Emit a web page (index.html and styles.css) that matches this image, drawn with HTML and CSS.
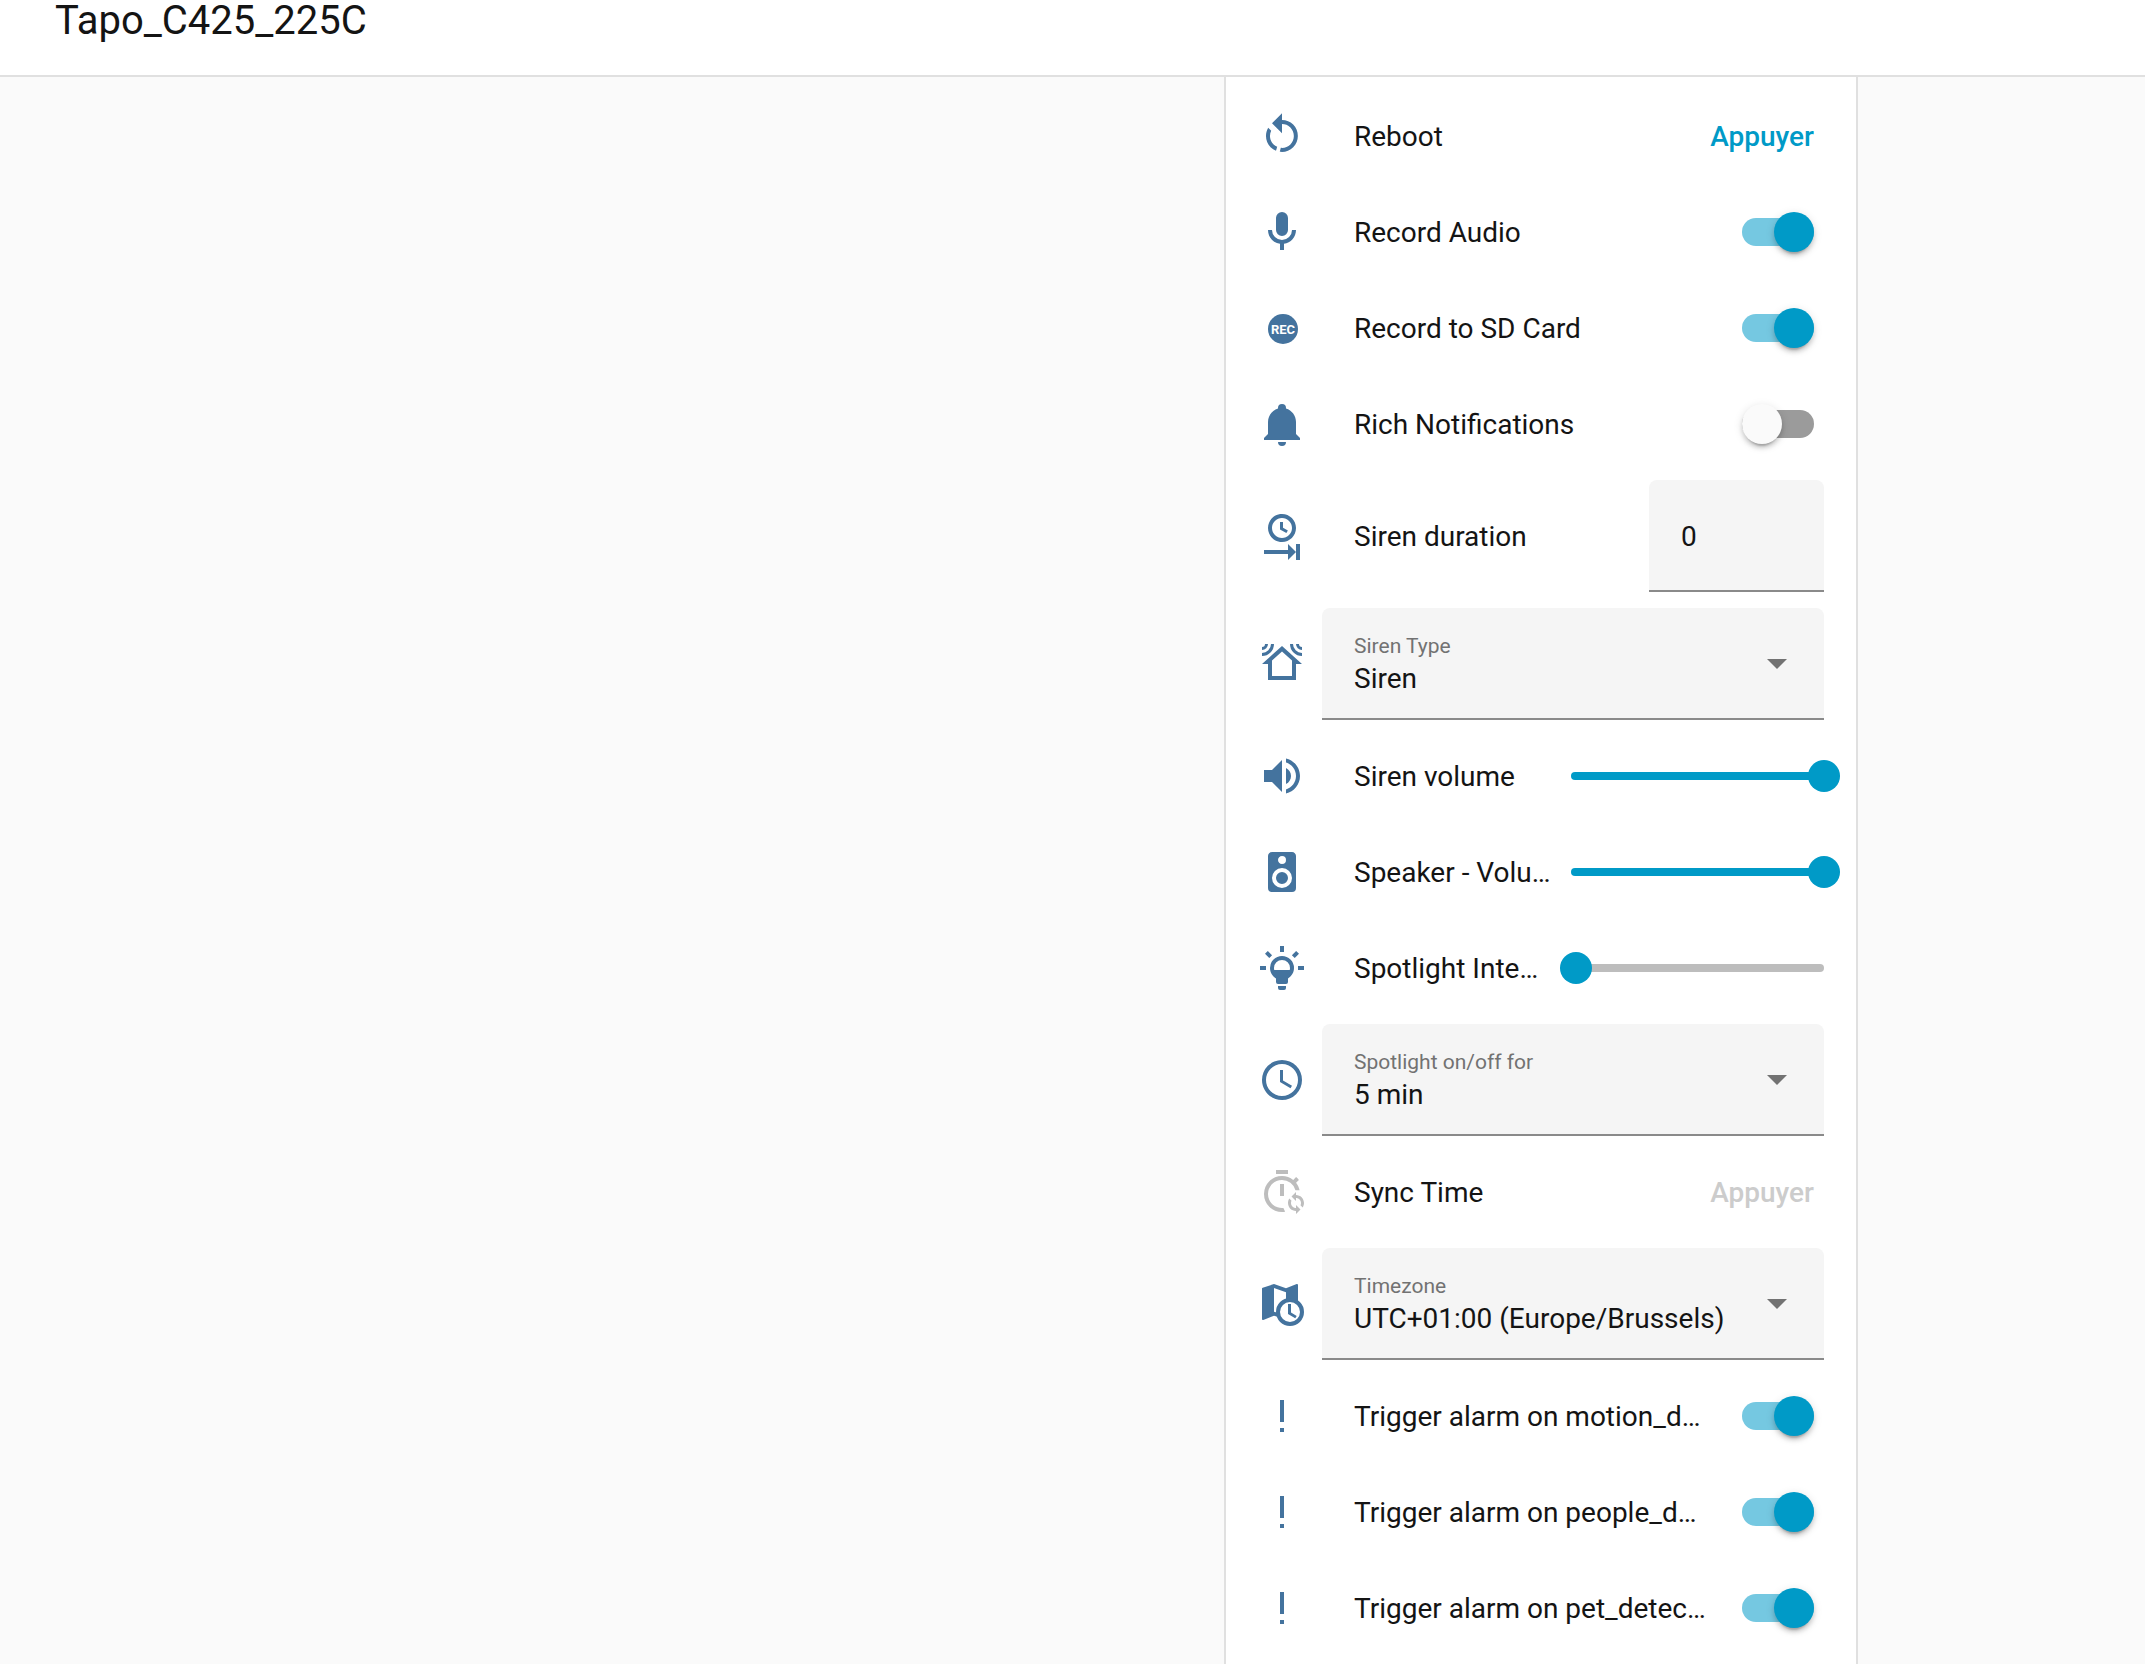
FILE: index.html
```html
<!DOCTYPE html>
<html lang="fr">
<head>
<meta charset="utf-8">
<meta name="viewport" content="width=device-width, initial-scale=1">
<title>Tapo_C425_225C</title>
<link rel="stylesheet" href="styles.css">
</head>
<body>
<header class="toolbar">
  <h1 class="toolbar-title">Tapo_C425_225C</h1>
</header>
<main class="page">
  <section class="card">
    <div class="row">
      <span class="icon"><svg viewBox="0 0 24 24" aria-hidden="true"><path d="M12,4C14.1,4 16.1,4.8 17.6,6.3C20.7,9.4 20.7,14.5 17.6,17.6C15.8,19.5 13.3,20.2 10.9,19.9L11.4,17.9C13.1,18.1 14.9,17.5 16.2,16.2C18.5,13.9 18.5,10.1 16.2,7.7C15.1,6.6 13.5,6 12,6V10.6L7,5.6L12,0.6V4M6.3,17.6C3.7,15 3.3,11 5.1,7.9L6.6,9.4C5.5,11.6 5.9,14.4 7.8,16.2C8.3,16.7 8.9,17.1 9.6,17.4L9,19.4C8,19 7.1,18.4 6.3,17.6Z"/></svg></span>
      <span class="name" id="reboot">Reboot</span>
      <button class="press" type="button" aria-describedby="reboot">Appuyer</button>
    </div>
    <div class="row">
      <span class="icon"><svg viewBox="0 0 24 24" aria-hidden="true"><path d="M12,2A3,3 0 0,1 15,5V11A3,3 0 0,1 12,14A3,3 0 0,1 9,11V5A3,3 0 0,1 12,2M19,11C19,14.53 16.39,17.44 13,17.93V21H11V17.93C7.61,17.44 5,14.53 5,11H7A5,5 0 0,0 12,16A5,5 0 0,0 17,11H19Z"/></svg></span>
      <label class="name" for="audio">Record Audio</label>
      <input class="switch" id="audio" type="checkbox" role="switch" checked>
    </div>
    <div class="row">
      <span class="icon"><svg viewBox="0 0 48 48" aria-hidden="true"><circle cx="25" cy="25" r="15"/><text class="rec" x="25" y="30" text-anchor="middle">REC</text></svg></span>
      <label class="name" for="sdcard">Record to SD Card</label>
      <input class="switch" id="sdcard" type="checkbox" role="switch" checked>
    </div>
    <div class="row">
      <span class="icon"><svg viewBox="0 0 24 24" aria-hidden="true"><path d="M21,19V20H3V19L5,17V11C5,7.9 7.03,5.17 10,4.29C10,4.19 10,4.1 10,4A2,2 0 0,1 12,2A2,2 0 0,1 14,4C14,4.1 14,4.19 14,4.29C16.97,5.17 19,7.9 19,11V17L21,19M14,21A2,2 0 0,1 12,23A2,2 0 0,1 10,21"/></svg></span>
      <label class="name" for="rich">Rich Notifications</label>
      <input class="switch" id="rich" type="checkbox" role="switch">
    </div>
    <div class="row">
      <span class="icon"><svg viewBox="0 0 24 24" aria-hidden="true"><path d="M12 1C8.14 1 5 4.14 5 8S8.14 15 12 15 19 11.86 19 8 15.86 1 12 1M12 3C14.76 3 17 5.24 17 8S14.76 13 12 13 7 10.76 7 8 9.24 3 12 3M11 5V8.69L14.19 10.53L14.94 9.23L12.5 7.82V5M15 16V19H3V21H15V24L19 20V24H21V16H19V20L15 16Z"/></svg></span>
      <label class="name" for="duration">Siren duration</label>
      <input class="number" id="duration" type="text" inputmode="numeric" value="0">
    </div>
    <div class="row">
      <span class="icon"><svg viewBox="0 0 24 24" aria-hidden="true"><path d="M12 5.69L17 10.19V18H7V10.19L12 5.69M12 3L2 12H5V20H19V12H22L12 3M8 2A6 6 0 0 1 2 8V6.5A4.5 4.5 0 0 0 6.5 2H8M5 2A3 3 0 0 1 2 5V3.5A1.5 1.5 0 0 0 3.5 2H5M16 2A6 6 0 0 0 22 8V6.5A4.5 4.5 0 0 1 17.5 2H16M19 2A3 3 0 0 0 22 5V3.5A1.5 1.5 0 0 1 20.5 2H19"/></svg></span>
      <div class="field">
        <label class="field-label" for="siren-type">Siren Type</label>
        <select class="select" id="siren-type"><option>Siren</option></select>
        <svg class="arrow" viewBox="0 0 20 10" aria-hidden="true"><path d="M0 0H20L10 10Z"/></svg>
      </div>
    </div>
    <div class="row">
      <span class="icon"><svg viewBox="0 0 24 24" aria-hidden="true"><path d="M14,3.23V5.29C16.89,6.15 19,8.83 19,12C19,15.17 16.89,17.84 14,18.7V20.77C18,19.86 21,16.28 21,12C21,7.72 18,4.14 14,3.23M16.5,12C16.5,10.23 15.5,8.71 14,7.97V16C15.5,15.29 16.5,13.76 16.5,12M3,9V15H7L12,20V4L7,9H3Z"/></svg></span>
      <label class="name" for="siren-volume">Siren volume</label>
      <div class="track" style="--value: 100%"><input class="slider" id="siren-volume" type="range" min="0" max="100" value="100"></div>
    </div>
    <div class="row">
      <span class="icon"><svg viewBox="0 0 24 24" aria-hidden="true"><path d="M12,12A3,3 0 0,0 9,15A3,3 0 0,0 12,18A3,3 0 0,0 15,15A3,3 0 0,0 12,12M12,20A5,5 0 0,1 7,15A5,5 0 0,1 12,10A5,5 0 0,1 17,15A5,5 0 0,1 12,20M12,4A2,2 0 0,1 14,6A2,2 0 0,1 12,8C10.89,8 10,7.1 10,6C10,4.89 10.89,4 12,4M17,2H7C5.89,2 5,2.89 5,4V20A2,2 0 0,0 7,22H17A2,2 0 0,0 19,20V4C19,2.89 18.1,2 17,2Z"/></svg></span>
      <label class="name" for="speaker">Speaker - Volume</label>
      <div class="track" style="--value: 100%"><input class="slider" id="speaker" type="range" min="0" max="100" value="100"></div>
    </div>
    <div class="row">
      <span class="icon"><svg viewBox="0 0 24 24" aria-hidden="true"><path fill-rule="evenodd" d="M12,6A6,6 0 0,1 18,12C18,14.22 16.79,16.16 15,17.2V19A1,1 0 0,1 14,20H10A1,1 0 0,1 9,19V17.2C7.21,16.16 6,14.22 6,12A6,6 0 0,1 12,6M14,21V22A1,1 0 0,1 13,23H11A1,1 0 0,1 10,22V21H14M20,11H23V13H20V11M1,11H4V13H1V11M13,1V4H11V1H13M4.92,3.5L7.05,5.64L5.63,7.05L3.5,4.93L4.92,3.5M16.95,5.63L19.07,3.5L20.5,4.93L18.37,7.05L16.95,5.63M8.13 13H15.87C15.96 12.7 16 12.36 16 12A4 4 0 0 0 8 12C8 12.36 8.04 12.7 8.13 13Z"/></svg></span>
      <label class="name" for="intensity">Spotlight Intensity</label>
      <div class="track" style="--value: 2%"><input class="slider" id="intensity" type="range" min="0" max="100" value="2"></div>
    </div>
    <div class="row">
      <span class="icon"><svg viewBox="0 0 24 24" aria-hidden="true"><path d="M12,20A8,8 0 0,0 20,12A8,8 0 0,0 12,4A8,8 0 0,0 4,12A8,8 0 0,0 12,20M12,2A10,10 0 0,1 22,12A10,10 0 0,1 12,22C6.47,22 2,17.5 2,12A10,10 0 0,1 12,2M12.5,7V12.25L17,14.92L16.25,16.15L11,13V7H12.5Z"/></svg></span>
      <div class="field">
        <label class="field-label" for="spotlight-for">Spotlight on/off for</label>
        <select class="select" id="spotlight-for"><option>5 min</option></select>
        <svg class="arrow" viewBox="0 0 20 10" aria-hidden="true"><path d="M0 0H20L10 10Z"/></svg>
      </div>
    </div>
    <div class="row">
      <span class="icon icon-off"><svg viewBox="0 0 24 24" aria-hidden="true"><path d="M9 1H15V3H9ZM11 8H13V14H11ZM13.58 21.86C13.07 21.95 12.54 22 12 22A9 9 0 0 1 3 13A9 9 0 0 1 12 4C14.12 4 16.07 4.74 17.62 6L19.04 4.56C19.55 5 20 5.46 20.45 6L19.03 7.39C19.9 8.45 20.5 9.7 20.8 11.1L18.73 11.1A7 7 0 0 0 12 6A7 7 0 0 0 5 13A7 7 0 0 0 12.7 19.96ZM19 12V13.5C21.21 13.5 23 15.29 23 17.5C23 18.32 22.75 19.08 22.33 19.71L21.24 18.62C21.41 18.28 21.5 17.9 21.5 17.5C21.5 16.12 20.38 15 19 15V16.5L16.75 14.25L19 12M19 23V21.5C16.79 21.5 15 19.71 15 17.5C15 16.68 15.25 15.92 15.67 15.29L16.76 16.38C16.59 16.72 16.5 17.1 16.5 17.5C16.5 18.88 17.62 20 19 20V18.5L21.25 20.75L19 23Z"/></svg></span>
      <span class="name" id="sync">Sync Time</span>
      <button class="press" type="button" aria-describedby="sync" disabled>Appuyer</button>
    </div>
    <div class="row">
      <span class="icon"><svg viewBox="0 0 24 24" aria-hidden="true"><path fill-rule="evenodd" d="M19.5 2L19.34 2.03L14 4.1L8 2L2.36 3.9A.5 .5 0 0 0 2 4.38V19.5A.5 .5 0 0 0 2.66 19.97L8 17.9L12 19L20 14V2.5A.5 .5 0 0 0 19.5 2M14 16V6.1L8 4V15.9L12 17Z"/><circle class="dial" cx="16" cy="16" r="6"/><path d="M15 12H16.5V16.25L19.36 17.94L18.61 19.16L15 17Z"/></svg></span>
      <div class="field">
        <label class="field-label" for="timezone">Timezone</label>
        <select class="select" id="timezone"><option>UTC+01:00 (Europe/Brussels)</option></select>
        <svg class="arrow" viewBox="0 0 20 10" aria-hidden="true"><path d="M0 0H20L10 10Z"/></svg>
      </div>
    </div>
    <div class="row">
      <span class="icon"><svg viewBox="0 0 24 24" aria-hidden="true"><path d="M11,4V15H13V4M11,18V20H13V18"/></svg></span>
      <label class="name" for="motion">Trigger alarm on motion_detection</label>
      <input class="switch" id="motion" type="checkbox" role="switch" checked>
    </div>
    <div class="row">
      <span class="icon"><svg viewBox="0 0 24 24" aria-hidden="true"><path d="M11,4V15H13V4M11,18V20H13V18"/></svg></span>
      <label class="name" for="people">Trigger alarm on people_detection</label>
      <input class="switch" id="people" type="checkbox" role="switch" checked>
    </div>
    <div class="row">
      <span class="icon"><svg viewBox="0 0 24 24" aria-hidden="true"><path d="M11,4V15H13V4M11,18V20H13V18"/></svg></span>
      <label class="name" for="pet">Trigger alarm on pet_detection</label>
      <input class="switch" id="pet" type="checkbox" role="switch" checked>
    </div>
  </section>
</main>
</body>
</html>
```
FILE: styles.css
```css
:root {
  --primary: #009ac7;
  --text: #141414;
  --muted: #727272;
  --divider: #e0e0e0;
  --icon: #44739e;
  --field: #f5f5f5;
}

* {
  box-sizing: border-box;
}

body {
  display: flex;
  flex-direction: column;
  min-height: 100vh;
  margin: 0;
  background: #fafafa;
  color: var(--text);
  font-family: Roboto, "Noto Sans", sans-serif;
  font-size: 28px;
  line-height: 40px;
}

.toolbar {
  padding: 0 55px 33px;
  border-bottom: 2px solid var(--divider);
  background: #fff;
}

.toolbar-title {
  margin: 0;
  font-size: 40px;
  font-weight: 400;
  line-height: 42px;
}

.page {
  display: grid;
  flex: 1;
  grid-template-columns: minmax(0, 1224fr) minmax(0, 634fr) minmax(0, 287fr);
}

.card {
  display: flex;
  grid-column: 2;
  flex-direction: column;
  gap: 16px;
  padding: 19px 32px 16px 16px;
  border: solid var(--divider);
  border-width: 0 2px;
  background: #fff;
}

.row {
  display: flex;
  align-items: center;
  min-height: 80px;
}

.icon {
  display: flex;
  flex: none;
  justify-content: center;
  width: 80px;
  color: var(--icon);
}

.icon svg {
  width: 48px;
  height: 48px;
  fill: currentColor;
}

.icon-off {
  color: #bdbdbd;
}

.icon .rec {
  fill: #fff;
  font-family: "Liberation Sans Narrow", Roboto, sans-serif;
  font-size: 13px;
  font-weight: 700;
}

.icon .dial {
  fill: #fff;
  stroke: currentColor;
  stroke-width: 2;
}

.name {
  flex: 1;
  min-width: 0;
  margin-left: 32px;
  padding-top: 2px;
  overflow: hidden;
  text-overflow: ellipsis;
  white-space: nowrap;
}

.press {
  margin-right: 10px;
  padding: 2px 0 0;
  border: 0;
  background: none;
  color: var(--primary);
  font: inherit;
  font-weight: 500;
}

.press:disabled {
  color: #cccccc;
}

.switch {
  display: flex;
  flex: none;
  align-items: center;
  width: 72px;
  height: 28px;
  margin: 0 10px 0 34px;
  border-radius: 14px;
  appearance: none;
  background: #9b9b9b;
}

.switch::before {
  width: 40px;
  height: 40px;
  flex: none;
  border-radius: 50%;
  background: #fafafa;
  box-shadow: 0 6px 2px -4px rgba(0, 0, 0, 0.2), 0 4px 4px rgba(0, 0, 0, 0.14), 0 2px 10px rgba(0, 0, 0, 0.12);
  content: "";
}

.switch:checked {
  justify-content: flex-end;
  background: #75c8e1;
}

.switch:checked::before {
  background: var(--primary);
}

.track {
  display: flex;
  flex: none;
  align-items: center;
  width: 253px;
  height: 8px;
  margin-left: 20px;
  border-radius: 4px;
  background: linear-gradient(to right, var(--primary) var(--value), #bdbdbd var(--value));
}

.slider {
  flex: none;
  width: calc(100% + 32px);
  height: 32px;
  margin: 0 -16px;
  appearance: none;
  background: none;
}

.slider::-webkit-slider-thumb {
  width: 32px;
  height: 32px;
  border-radius: 50%;
  appearance: none;
  background: var(--primary);
}

.slider::-moz-range-thumb {
  width: 32px;
  height: 32px;
  border: 0;
  border-radius: 50%;
  background: var(--primary);
}

.number,
.select {
  height: 112px;
  border: 0;
  border-bottom: 2px solid #8a8a8a;
  border-radius: 8px 8px 0 0;
  appearance: none;
  background: var(--field);
  color: var(--text);
  font: inherit;
}

.number {
  flex: none;
  width: 175px;
  padding: 2px 32px 0;
}

.field {
  position: relative;
  display: flex;
  flex: 1;
  min-width: 0;
}

.select {
  width: 100%;
  padding: 32px 80px 0 32px;
}

.field-label {
  position: absolute;
  top: 26px;
  left: 32px;
  color: var(--muted);
  font-size: 21px;
  line-height: 24px;
}

.arrow {
  position: absolute;
  top: 51px;
  right: 37px;
  width: 20px;
  height: 10px;
  fill: var(--muted);
  pointer-events: none;
}
```
